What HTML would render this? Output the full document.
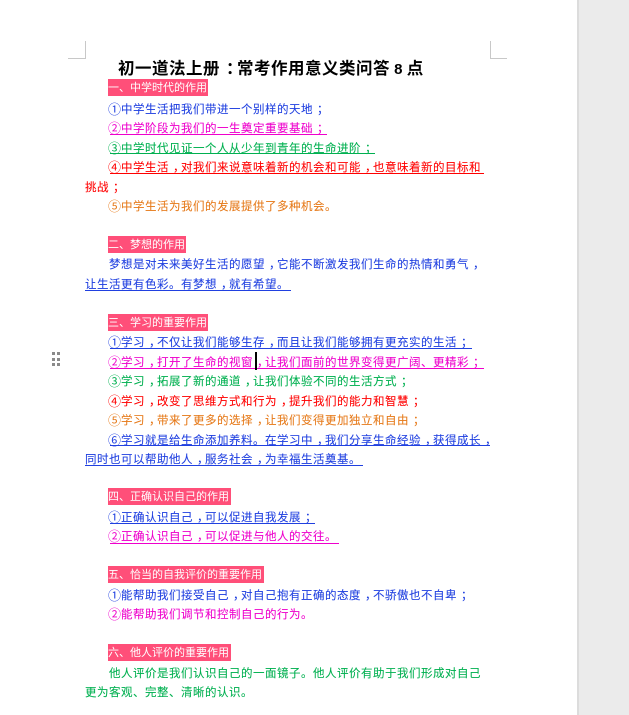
<!DOCTYPE html>
<html lang="zh">
<head>
<meta charset="utf-8">
<style>
html,body{margin:0;padding:0;background:#fff}
body{width:629px;height:715px;overflow:hidden;position:relative;font-family:"Liberation Sans","Noto Sans CJK SC",sans-serif}
.side{position:absolute;left:577px;top:0;width:52px;height:715px;background:#ebebeb;border-left:2px solid #dcdcdc;box-sizing:border-box}
.m{position:absolute;background:#c8c8c8}
.t{position:absolute;left:118px;top:58px;font-size:16.5px;line-height:22px;font-weight:bold;letter-spacing:.5px;color:#000;white-space:nowrap}
.t i{font-style:normal;letter-spacing:0;font-size:15px}
.t .c{left:6px}
.h{position:absolute;left:108px;height:17px;line-height:19px;background:#ff4f79;color:#fff;font-size:11px;white-space:nowrap}
.l{position:absolute;font-size:11.5px;line-height:16px;letter-spacing:.5px;white-space:nowrap;-webkit-text-stroke:.08px}
.n{display:inline-block;width:13px;letter-spacing:0;font-size:13px;line-height:16px;position:relative;top:1px;-webkit-text-stroke:0}
.c{position:relative;left:4px}
.u{position:absolute;height:1px}
.b{color:#2040e0}.p{color:#ee00cc}.g{color:#00b050}.r{color:#ff0000}.o{color:#e67a1a}
.ub{background:#2040e0}.up{background:#ee00cc}.ug{background:#00b050}.ur{background:#ff0000}
.d{position:absolute;width:3px;height:3px;background:#8a8a8a}
</style>
</head>
<body>
<div class="side"></div>
<div class="m" style="left:85px;top:41px;width:1px;height:18px"></div>
<div class="m" style="left:68px;top:58px;width:17px;height:1px"></div>
<div class="m" style="left:490px;top:41px;width:1px;height:18px"></div>
<div class="m" style="left:490px;top:58px;width:17px;height:1px"></div>

<div class="t">初一道法上册<span class="c">：</span>常考作用意义类问答<i> 8 </i>点</div>

<div class="h" style="top:79px;width:100px">一、中学时代的作用</div>
<div class="l b" style="left:108px;top:101px"><span class="n">①</span>中学生活把我们带进一个别样的天地<span class="c">；</span></div>
<div class="l p" style="left:108px;top:120px"><span class="n">②</span>中学阶段为我们的一生奠定重要基础<span class="c">；</span></div>
<div class="u up" style="left:110px;top:134px;width:217px"></div>
<div class="l g" style="left:108px;top:140px"><span class="n">③</span>中学时代见证一个人从少年到青年的生命进阶<span class="c">；</span></div>
<div class="u ug" style="left:110px;top:153px;width:265px"></div>
<div class="l r" style="left:108px;top:159px"><span class="n">④</span>中学生活<span class="c">，</span>对我们来说意味着新的机会和可能<span class="c">，</span>也意味着新的目标和</div>
<div class="u ur" style="left:110px;top:173px;width:374px"></div>
<div class="l r" style="left:85px;top:180px">挑战<span class="c">；</span></div>
<div class="l o" style="left:108px;top:198px"><span class="n">⑤</span>中学生活为我们的发展提供了多种机会。</div>

<div class="h" style="top:236px;width:78px">二、梦想的作用</div>
<div class="l b" style="left:109px;top:257px">梦想是对未来美好生活的愿望<span class="c">，</span>它能不断激发我们生命的热情和勇气<span class="c">，</span></div>
<div class="l b" style="left:85px;top:277px">让生活更有色彩。有梦想<span class="c">，</span>就有希望。</div>
<div class="u ub" style="left:85px;top:290px;width:206px"></div>

<div class="h" style="top:314px;width:100px">三、学习的重要作用</div>
<div class="l b" style="left:108px;top:334px"><span class="n">①</span>学习<span class="c">，</span>不仅让我们能够生存<span class="c">，</span>而且让我们能够拥有更充实的生活<span class="c">；</span></div>
<div class="u ub" style="left:110px;top:348px;width:362px"></div>
<div class="l p" style="left:108px;top:354px"><span class="n">②</span>学习<span class="c">，</span>打开了生命的视窗<span class="c">，</span>让我们面前的世界变得更广阔、更精彩<span class="c">；</span></div>
<div class="u up" style="left:110px;top:368px;width:374px"></div>
<div class="l g" style="left:108px;top:373px"><span class="n">③</span>学习<span class="c">，</span>拓展了新的通道<span class="c">，</span>让我们体验不同的生活方式<span class="c">；</span></div>
<div class="l r" style="left:108px;top:393px"><span class="n">④</span>学习<span class="c">，</span>改变了思维方式和行为<span class="c">，</span>提升我们的能力和智慧<span class="c">；</span></div>
<div class="l o" style="left:108px;top:412px"><span class="n">⑤</span>学习<span class="c">，</span>带来了更多的选择<span class="c">，</span>让我们变得更加独立和自由<span class="c">；</span></div>
<div class="l b" style="left:108px;top:432px"><span class="n">⑥</span>学习就是给生命添加养料。在学习中<span class="c">，</span>我们分享生命经验<span class="c">，</span>获得成长<span class="c">，</span></div>
<div class="u ub" style="left:110px;top:445px;width:380px"></div>
<div class="l b" style="left:85px;top:452px">同时也可以帮助他人<span class="c">，</span>服务社会<span class="c">，</span>为幸福生活奠基。</div>
<div class="u ub" style="left:85px;top:465px;width:278px"></div>

<div class="h" style="top:488px;width:123px">四、正确认识自己的作用</div>
<div class="l b" style="left:108px;top:509px"><span class="n">①</span>正确认识自己<span class="c">，</span>可以促进自我发展<span class="c">；</span></div>
<div class="u ub" style="left:110px;top:523px;width:205px"></div>
<div class="l p" style="left:108px;top:528px"><span class="n">②</span>正确认识自己<span class="c">，</span>可以促进与他人的交往。</div>
<div class="u up" style="left:110px;top:543px;width:229px"></div>

<div class="h" style="top:566px;width:156px">五、恰当的自我评价的重要作用</div>
<div class="l b" style="left:108px;top:587px"><span class="n">①</span>能帮助我们接受自己<span class="c">，</span>对自己抱有正确的态度<span class="c">，</span>不骄傲也不自卑<span class="c">；</span></div>
<div class="l p" style="left:108px;top:606px"><span class="n">②</span>能帮助我们调节和控制自己的行为。</div>

<div class="h" style="top:644px;width:123px">六、他人评价的重要作用</div>
<div class="l g" style="left:109px;top:666px">他人评价是我们认识自己的一面镜子。他人评价有助于我们形成对自己</div>
<div class="l g" style="left:85px;top:685px">更为客观、完整、清晰的认识。</div>

<div style="position:absolute;left:255px;top:352px;width:2px;height:18px;background:#000"></div>

<div class="d" style="left:52px;top:352px"></div><div class="d" style="left:57px;top:352px"></div>
<div class="d" style="left:52px;top:358px"></div><div class="d" style="left:57px;top:358px"></div>
<div class="d" style="left:52px;top:363px"></div><div class="d" style="left:57px;top:363px"></div>
</body>
</html>
